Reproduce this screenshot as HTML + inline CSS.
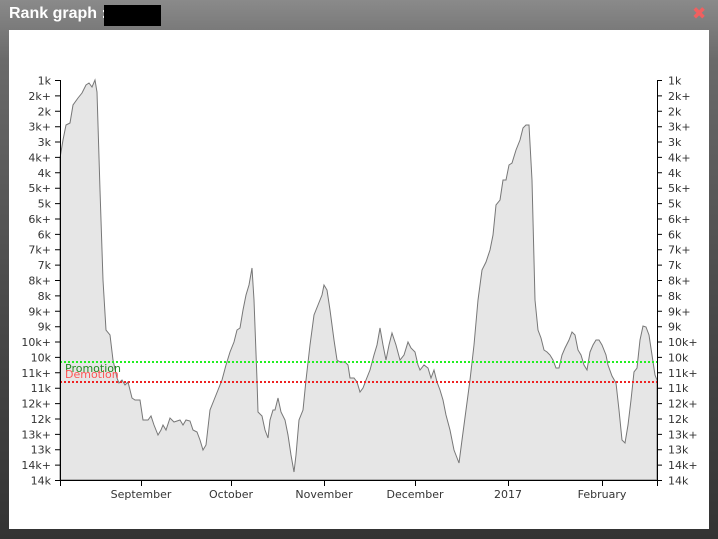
<!DOCTYPE html>
<html><head><meta charset="utf-8"><style>
html,body{margin:0;padding:0;width:718px;height:539px;overflow:hidden;background:linear-gradient(#8a8a8a 0px,#6a6a6a 60px,#4a4a4a 300px,#333 539px);font-family:"DejaVu Sans","Liberation Sans",sans-serif}
#t{position:absolute;left:9px;top:5px;color:#fff;font-weight:bold;font-size:16px;font-family:"Liberation Sans",sans-serif}
#b{position:absolute;left:104px;top:5px;width:57px;height:21px;background:#000}
#x{position:absolute;left:692px;top:4px;color:#f06060;font-size:17px;font-weight:bold}
#p{position:absolute;left:9px;top:30px;width:700px;height:499px;background:#fff}
svg{position:absolute;left:0;top:0}
</style></head><body>
<div id="t">Rank graph :</div><div id="b"></div><div id="x">✖</div>
<div id="p"></div>
<svg width="718" height="539" font-family="DejaVu Sans, Liberation Sans, sans-serif" font-size="11">
<path fill="#e6e6e6" stroke="#777" stroke-width="1" d="M60,158 L63,140 66,125 70,123 73,105 78,98 82,93 86,85 89,83 92,87 95,80 97,92 100,190 103,280 106,330 110,335 113,360 117,378 119,383 122,380 125,385 128,382 132,398 135,400 140,400 143,420 148,420 151,416 154,425 158,435 161,430 163,425 166,430 170,418 174,422 180,420 183,425 186,420 190,421 193,430 197,432 200,440 203,450 206,445 210,410 214,400 218,390 222,380 226,365 230,352 234,342 237,330 240,328 243,310 246,295 249,285 252,268 254,300 257,380 258,412 262,416 265,430 268,438 270,420 273,410 275,410 278,398 281,412 285,420 288,435 291,455 294,472 296,455 299,420 303,410 306,380 310,345 314,315 318,305 322,295 324,285 327,290 330,310 334,340 337,360 340,362 345,362 348,365 350,378 354,378 357,382 360,392 363,388 366,380 370,370 374,355 377,345 380,328 383,345 386,360 389,345 392,333 396,345 400,360 404,355 408,342 411,348 415,352 418,365 420,370 424,365 428,368 431,378 434,370 437,382 440,390 443,400 446,415 450,430 454,450 459,463 462,440 466,410 470,380 474,345 478,300 482,270 486,262 490,250 493,235 496,205 500,200 503,180 506,180 509,165 512,163 516,150 520,140 523,128 526,125 529,125 532,180 535,300 538,330 541,338 544,350 547,352 550,355 553,360 556,368 559,368 562,355 565,348 569,340 572,332 575,335 578,350 581,355 584,365 587,370 590,352 593,345 596,340 599,340 602,345 606,355 608,365 612,376 616,383 619,410 622,440 625,443 628,425 631,400 634,372 637,368 640,340 643,326 646,327 649,335 652,355 655,375 657,380 L657,480 L60,480 Z"/>
<line x1="60" y1="362" x2="657" y2="362" stroke="#2e2" stroke-width="2" stroke-dasharray="2,2"/>
<line x1="60" y1="382" x2="657" y2="382" stroke="#e22" stroke-width="2" stroke-dasharray="2,2"/>
<text x="65" y="372" fill="#282" font-size="11">Promotion</text>
<text x="65" y="378" fill="#f55" font-size="11">Demotion</text>
<g stroke="#000" stroke-width="1" fill="none">
<path d="M60.5,80 V480.5 H657.5 V80"/>
<path d="M141.5,480 v6 M231.5,480 v6 M324.5,480 v6 M415.5,480 v6 M508.5,480 v6 M602.5,480 v6 M60.5,480 v6 M657.5,480 v6"/>
<path d="M55,80.5h5 M55,95.9h5 M55,111.3h5 M55,126.7h5 M55,142h5 M55,157.4h5 M55,172.8h5 M55,188.2h5 M55,203.6h5 M55,219h5 M55,234.4h5 M55,249.7h5 M55,265.1h5 M55,280.5h5 M55,295.9h5 M55,311.3h5 M55,326.7h5 M55,342h5 M55,357.4h5 M55,372.8h5 M55,388.2h5 M55,403.6h5 M55,419h5 M55,434.4h5 M55,449.7h5 M55,465.1h5 M55,480.5h5"/>
<path d="M657,80.5h5 M657,95.9h5 M657,111.3h5 M657,126.7h5 M657,142h5 M657,157.4h5 M657,172.8h5 M657,188.2h5 M657,203.6h5 M657,219h5 M657,234.4h5 M657,249.7h5 M657,265.1h5 M657,280.5h5 M657,295.9h5 M657,311.3h5 M657,326.7h5 M657,342h5 M657,357.4h5 M657,372.8h5 M657,388.2h5 M657,403.6h5 M657,419h5 M657,434.4h5 M657,449.7h5 M657,465.1h5 M657,480.5h5"/>
</g>
<g fill="#333" text-anchor="end">
<text x="51" y="84.5">1k</text><text x="51" y="99.9">2k+</text><text x="51" y="115.3">2k</text><text x="51" y="130.7">3k+</text><text x="51" y="146">3k</text><text x="51" y="161.4">4k+</text><text x="51" y="176.8">4k</text><text x="51" y="192.2">5k+</text><text x="51" y="207.6">5k</text><text x="51" y="223">6k+</text><text x="51" y="238.4">6k</text><text x="51" y="253.7">7k+</text><text x="51" y="269.1">7k</text><text x="51" y="284.5">8k+</text><text x="51" y="299.9">8k</text><text x="51" y="315.3">9k+</text><text x="51" y="330.7">9k</text><text x="51" y="346">10k+</text><text x="51" y="361.4">10k</text><text x="51" y="376.8">11k+</text><text x="51" y="392.2">11k</text><text x="51" y="407.6">12k+</text><text x="51" y="423">12k</text><text x="51" y="438.4">13k+</text><text x="51" y="453.7">13k</text><text x="51" y="469.1">14k+</text><text x="51" y="484.5">14k</text>
</g>
<g fill="#333">
<text x="668" y="84.5">1k</text><text x="668" y="99.9">2k+</text><text x="668" y="115.3">2k</text><text x="668" y="130.7">3k+</text><text x="668" y="146">3k</text><text x="668" y="161.4">4k+</text><text x="668" y="176.8">4k</text><text x="668" y="192.2">5k+</text><text x="668" y="207.6">5k</text><text x="668" y="223">6k+</text><text x="668" y="238.4">6k</text><text x="668" y="253.7">7k+</text><text x="668" y="269.1">7k</text><text x="668" y="284.5">8k+</text><text x="668" y="299.9">8k</text><text x="668" y="315.3">9k+</text><text x="668" y="330.7">9k</text><text x="668" y="346">10k+</text><text x="668" y="361.4">10k</text><text x="668" y="376.8">11k+</text><text x="668" y="392.2">11k</text><text x="668" y="407.6">12k+</text><text x="668" y="423">12k</text><text x="668" y="438.4">13k+</text><text x="668" y="453.7">13k</text><text x="668" y="469.1">14k+</text><text x="668" y="484.5">14k</text>
</g>
<g fill="#333" text-anchor="middle">
<text x="141" y="498">September</text><text x="231" y="498">October</text><text x="324" y="498">November</text><text x="415" y="498">December</text><text x="508" y="498">2017</text><text x="602" y="498">February</text>
</g>
</svg>
</body></html>
